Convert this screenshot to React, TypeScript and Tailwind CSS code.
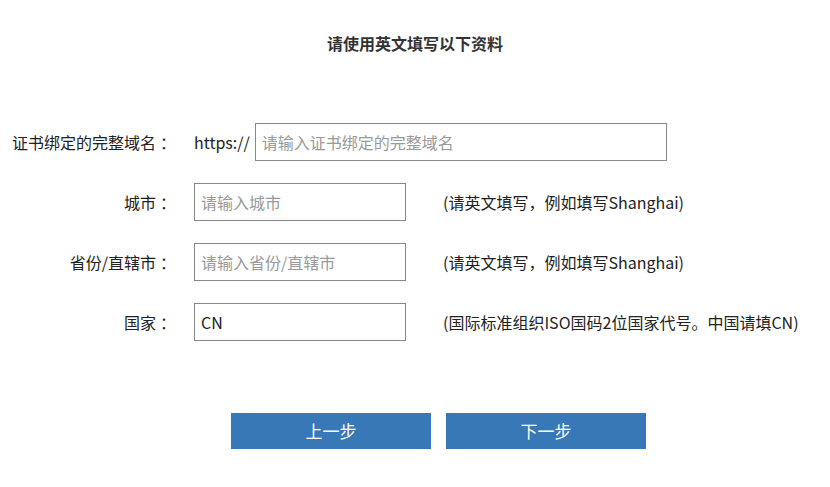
const font = { fontFamily: '"Noto Sans CJK SC", "Noto Sans", sans-serif' };

type Row = {
  label: string;
  prefix?: string;
  placeholder?: string;
  value?: string;
  wide?: boolean;
  hint?: string;
};

const rows: Row[] = [
  { label: "证书绑定的完整域名", prefix: "https://", placeholder: "请输入证书绑定的完整域名", wide: true },
  { label: "城市", placeholder: "请输入城市", hint: "(请英文填写，例如填写Shanghai)" },
  { label: "省份/直辖市", placeholder: "请输入省份/直辖市", hint: "(请英文填写，例如填写Shanghai)" },
  { label: "国家", value: "CN", hint: "(国际标准组织ISO国码2位国家代号。中国请填CN)" },
];

export default function App() {
  return (
    <div className="w-[830px] h-[487px] bg-white text-[#222]" style={font}>
      <h1 className="pt-[31px] text-center text-[16px] leading-[24px] font-bold text-[#333]">
        请使用英文填写以下资料
      </h1>

      <div className="mt-[68px] flex flex-col gap-[22px]">
        {rows.map((r) => (
          <div key={r.label} className="flex items-center h-[38px] text-[16px]">
            <label className="w-[172px] flex justify-end whitespace-nowrap">
              <span>{r.label}</span>
              {/* centred colon like the original font */}
              <span className="w-[16px] pl-[4px] overflow-visible">：</span>
            </label>
            <div className="ml-[22px] flex items-center">
              {r.prefix && <span className="mr-[5px]">{r.prefix}</span>}
              <input
                className={`h-[38px] border border-[#888] px-[6px] text-[16px] text-[#222] placeholder:text-[#999] outline-none ${
                  r.wide ? "w-[412px]" : "w-[212px]"
                }`}
                placeholder={r.placeholder}
                defaultValue={r.value}
                style={font}
              />
            </div>
            {r.hint && <span className="ml-[37px] whitespace-nowrap">{r.hint}</span>}
          </div>
        ))}
      </div>

      <div className="mt-[72px] pl-[231px] flex gap-[15px]">
        <button className="w-[200px] h-[36px] bg-[#3878b6] text-white text-[17px]" style={font}>
          上一步
        </button>
        <button className="w-[200px] h-[36px] bg-[#3878b6] text-white text-[17px]" style={font}>
          下一步
        </button>
      </div>
    </div>
  );
}
